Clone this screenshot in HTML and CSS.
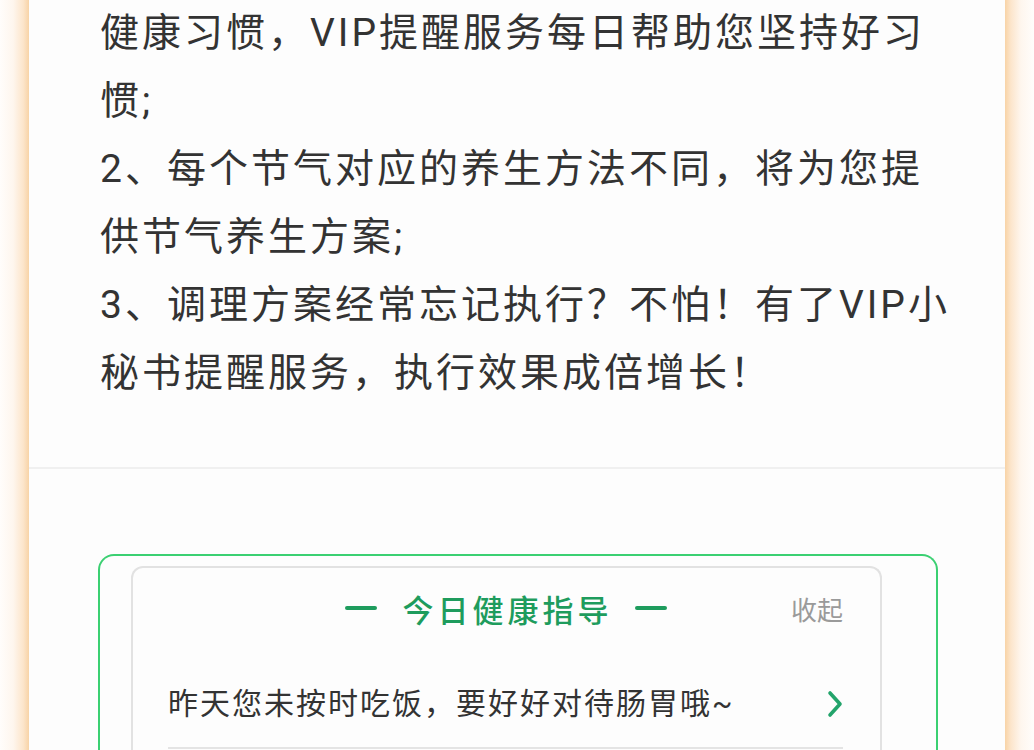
FILE: index.html
```html
<!DOCTYPE html>
<html lang="zh-CN">
<head>
<meta charset="utf-8">
<title>VIP提醒服务</title>
<link rel="stylesheet" href="styles.css">
</head>
<body>
<div class="page">
  <div class="strip strip-left"></div>
  <main class="card">
    <div class="intro">
      <p class="intro-text">健康习惯，VIP提醒服务每日帮助您坚持好习惯;<br>2、每个节气对应的养生方法不同，将为您提供节气养生方案;<br>3、调理方案经常忘记执行？不怕！有了VIP小秘书提醒服务，执行效果成倍增长！</p>
    </div>
    <section class="guide-wrap">
      <div class="guide-frame">
        <div class="guide-card">
          <div class="guide-head">
            <div class="guide-title"><span class="dash"></span><span class="title-text">今日健康指导</span><span class="dash"></span></div>
            <span class="collapse">收起</span>
          </div>
          <div class="guide-row">
            <span class="row-text">昨天您未按时吃饭，要好好对待肠胃哦~</span>
            <svg class="chev" width="16" height="28" viewBox="0 0 16 28"><polyline points="3,3 13,14 3,25" fill="none" stroke="#23a46b" stroke-width="3.6" stroke-linecap="round" stroke-linejoin="round"/></svg>
          </div>
        </div>
      </div>
    </section>
  </main>
  <div class="strip strip-right"></div>
</div>
</body>
</html>
```

FILE: styles.css
```css
* { box-sizing: border-box; }
html, body { margin: 0; padding: 0; }
body {
  font-family: Roboto, "Noto Sans CJK SC", sans-serif;
  background: #fff;
}
.page {
  display: flex;
  height: 750px;
  overflow: hidden;
}
.strip { width: 29px; flex: none; }
.strip-left {
  background: linear-gradient(to right, #fffdfb 0%, #fef6ee 45%, #fce5cb 80%, #f8d3a6 100%);
}
.strip-right {
  background: linear-gradient(to left, #fffdfb 0%, #fef6ee 45%, #fce5cb 80%, #f8d3a6 100%);
}
.card {
  flex: 1;
  background: #fdfdfd;
}
.intro {
  padding: 0 47px 60px 71px;
  border-bottom: 2px solid #f0f0f0;
}
.intro-text {
  margin: -1px 0 0;
  font-size: 39px;
  line-height: 68px;
  letter-spacing: 3px;
  color: #333;
}
.guide-wrap {
  padding: 85px 67px 0 69px;
}
.guide-frame {
  border: 2px solid #3bd072;
  border-bottom: none;
  border-radius: 16px 16px 0 0;
  padding: 10px 54px 0 31px;
  height: 200px;
}
.guide-card {
  border: 2px solid #e2e2e2;
  border-bottom: none;
  border-radius: 12px 12px 0 0;
  background: #fdfdfd;
  height: 200px;
}
.guide-head {
  height: 80px;
  display: grid;
  grid-template-columns: 1fr auto 1fr;
  align-items: center;
  padding: 0 37px 0 35px;
}
.guide-title {
  grid-column: 2;
  display: flex;
  align-items: center;
  gap: 26px;
  color: #1e9c5d;
  font-size: 31px;
  font-weight: 500;
  letter-spacing: 4px;
}
.title-text { margin-right: -4px; }
.dash {
  display: block;
  width: 32px;
  height: 4px;
  border-radius: 2px;
  background: #1e9c5d;
}
.collapse {
  grid-column: 3;
  justify-self: end;
  font-size: 26px;
  color: #9a9a9a;
}
.guide-row {
  margin: 0 37px 0 35px;
  padding: 36px 0 23px;
  display: flex;
  align-items: center;
  justify-content: space-between;
  border-bottom: 2px solid #e4e4e4;
}
.row-text {
  font-size: 30px;
  line-height: 40px;
  letter-spacing: 2px;
  color: #333;
}
.chev { display: block; }
```
